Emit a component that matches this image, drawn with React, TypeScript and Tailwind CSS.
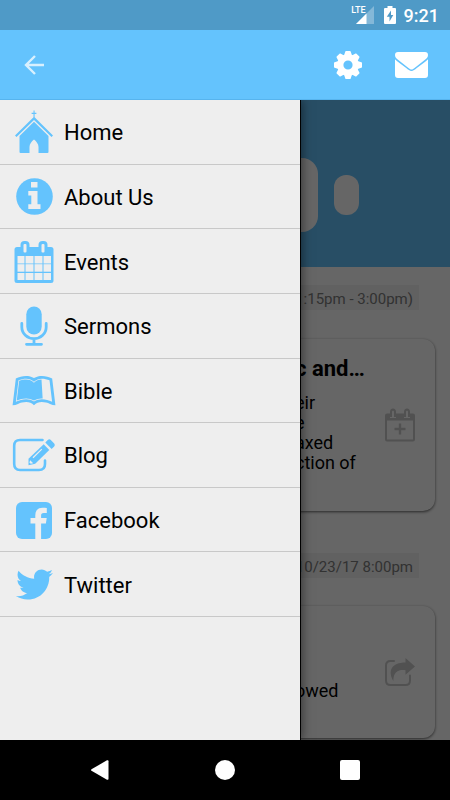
import type { ReactNode } from "react";
import { FaLeanpub, FaTwitter } from "react-icons/fa";

function ChurchIcon() {
  return (
    <svg viewBox="0 0 40 44" className="h-11 w-10" fill="currentColor">
      <path d="M19.500 0.500h1.100v2.200h1.800v1.200h-1.800V7.200L39 25.400 37.500 27 20 10 2.500 27 1 25.400 19.500 7.200V3.900h-1.900V2.700h1.900z" />
      <path d="M20 11.800 34.500 26V42a1 1 0 0 1-1 1H24.500V37c0-3-2-5.500-4.500-7.500-2.500 2-4.500 4.500-4.500 7.500V43H6.500a1 1 0 0 1-1-1V26z" />
    </svg>
  );
}

function InfoIcon() {
  return (
    <svg viewBox="0 0 37 37" className="size-[37px]">
      <circle cx="18.500" cy="18.500" r="18.300" fill="currentColor" />
      <path d="M15 4h6.500v5.500H15zM12.300 13h9.200v13.200h3V31H12.300v-4.800h3V17.500h-3z" fill="#eee" />
    </svg>
  );
}

function CalendarIcon() {
  return (
    <svg viewBox="0 0 40 44" className="h-11 w-10">
      <rect x="0.5" y="7" width="39" height="36" rx="2.500" fill="currentColor" />
      <rect x="6.500" y="1" width="9" height="14" rx="4" fill="currentColor" />
      <rect x="24.500" y="1" width="9" height="14" rx="4" fill="currentColor" />
      <g fill="#eee">
        <rect x="9.500" y="4" width="3" height="8.500" rx="1" />
        <rect x="27.500" y="4" width="3" height="8.500" rx="1" />
        {[16, 24.2, 33].map((y, row) =>
          [3.5, 11.5, 20.5, 29.5].map((x, col) => (
            <rect key={`${row}-${col}`} x={x} y={y} width={col === 0 ? 7 : col === 3 ? 7.5 : 8} height={row === 2 ? 7 : 7.500} />
          )),
        )}
      </g>
    </svg>
  );
}

function MicrophoneIcon() {
  return (
    <svg viewBox="0 0 28 40" className="h-10 w-7">
      <rect x="6.300" y="0.500" width="15.400" height="28" rx="7.700" fill="currentColor" />
      <path d="M1.800 17.500v3.500a12.200 11.700 0 0 0 24.400 0v-3.500M14 33v5M6.500 38.300h15" fill="none" stroke="currentColor" strokeWidth="2.800" strokeLinecap="round" />
    </svg>
  );
}

function EditIcon() {
  return (
    <svg viewBox="0 0 44 36" className="h-9 w-11">
      <path d="M30.500 3H8Q2.200 3 2.200 8.800V27Q2.200 33 8 33H27Q33 33 33 27V23.500" fill="none" stroke="currentColor" strokeWidth="2.600" strokeLinecap="round" />
      <path d="M31.700 7.200 37.300 13 23.200 26.800 16.500 28.200V21.700z" fill="currentColor" />
      <path d="m33.300 5.600 2.500-2.500q1.500-1.500 3 0l3.400 3.400q1.300 1.500 0 2.900L39.600 12z" fill="currentColor" />
      <path d="m21 20.800 8.800-8.700" stroke="#eee" strokeWidth="1.200" />
      <path d="m18.200 23.200 3 3-2.500.6-1.300-1.300z" fill="#eee" />
    </svg>
  );
}

function FacebookIcon() {
  return (
    <svg viewBox="0 0 36 37" className="h-[37px] w-9">
      <rect width="36" height="37" rx="6" fill="currentColor" />
      <path d="M19.300 37V21.500h-4.800v-5.500h4.800v-2.800c0-4.800 2.800-7.400 7.200-7.400 1.600 0 3 .1 4.300.3v4.900h-3c-2.200 0-2.700 1.100-2.700 2.700v2.300h5.600l-.8 5.500h-4.800V37z" fill="#eee" />
    </svg>
  );
}

function GearIcon() {
  return (
    <svg viewBox="-14 -14 28 28" className="size-7">
      <circle r="7.700" fill="none" stroke="currentColor" strokeWidth="6.200" />
      {[0, 45, 90, 135, 180, 225, 270, 315].map((angle) => (
        <path key={angle} d="M-4-9.500-2.700-13.400Q-2.500-14-2-14H2Q2.500-14 2.700-13.400L4-9.500z" fill="currentColor" transform={`rotate(${angle})`} />
      ))}
    </svg>
  );
}

function EnvelopeIcon() {
  return (
    <svg viewBox="0 0 33 26" className="h-[26px] w-[33px]" fill="currentColor">
      <path d="M3 0h27q3 0 3 3c0 2-1.300 3.500-3 4.800L20.500 15.200C18.500 16.700 17.500 17.500 16.500 17.500s-2-.8-4-2.300L3 7.800C1.300 6.500 0 5 0 3q0-3 3-3z" />
      <path d="M0 7.200c.8 1 1.800 1.800 2.800 2.500l8.400 6.400c2 1.600 3.600 2.900 5.300 2.900s3.300-1.300 5.300-2.900l8.400-6.400c1-.7 2-1.500 2.800-2.500V23q0 3-3 3H3q-3 0-3-3z" />
    </svg>
  );
}

function CalendarPlusIcon() {
  return (
    <svg viewBox="0 0 30 34" className="h-[34px] w-[30px]" fill="none" stroke="currentColor">
      <path d="M1 12V31.500Q1 32.500 2 32.500H28Q29 32.500 29 31.500V12" strokeWidth="2" />
      <path d="M0 12.500V7.500Q0 5.500 2 5.500H5V10h6V5.500h8V10h6V5.500h3q2 0 2 2v5z" fill="currentColor" stroke="none" />
      <path d="M6 9V4a2 2.500 0 0 1 4 0V9M20 9V4a2 2.500 0 0 1 4 0V9" strokeWidth="2" />
      <path d="M15 15.500v11M9.500 21h11" strokeWidth="2.400" />
    </svg>
  );
}

function ShareIcon() {
  return (
    <svg viewBox="0 0 30 28" className="h-7 w-[30px]">
      <path d="M9 3H5.500Q1 3 1 7.500V22.500Q1 27 5.500 27H20.500Q25 27 25 22.500V17.500" fill="none" stroke="currentColor" strokeWidth="2" strokeLinecap="round" />
      <path d="M20.500 0 30 8.500l-9.500 8.300v-4.600c-7-.6-12 1-12.200 10.800C2.500 13 6.500 4.600 20.500 4.600z" fill="currentColor" />
    </svg>
  );
}

const menu: { label: string; icon: ReactNode }[] = [
  { label: "Home", icon: <ChurchIcon /> },
  { label: "About Us", icon: <InfoIcon /> },
  { label: "Events", icon: <CalendarIcon /> },
  { label: "Sermons", icon: <MicrophoneIcon /> },
  { label: "Bible", icon: <FaLeanpub className="h-[39px] w-[44px]" /> },
  { label: "Blog", icon: <EditIcon /> },
  { label: "Facebook", icon: <FacebookIcon /> },
  { label: "Twitter", icon: <FaTwitter className="size-[37px]" /> },
];

function StatusBar() {
  return (
    <div className="flex h-[30px] shrink-0 items-center justify-end bg-[#4f9ac7] pr-[11px] text-white">
      <span className="self-start pt-1 text-[9px] leading-3 font-medium">LTE</span>
      <svg viewBox="0 0 18 18" className="-ml-[10px] h-[18px] w-[18px]">
        <path d="M18 0V18H0z" fill="#fff" fillOpacity="0.300" />
        <path d="M10.500 7.500V18H0z" fill="#fff" />
      </svg>
      <svg viewBox="0 0 12 18" className="ml-[10px] h-[18px] w-3">
        <path d="M3.500 0h5v2H11q1 0 1 1V17q0 1-1 1H1q-1 0-1-1V3q0-1 1-1h2.500z" fill="#fff" />
        <path d="M7 4.500 2.800 10.800H5.500V15.500L9.300 9H7z" fill="#4f9ac7" />
      </svg>
      <time className="ml-2 pt-0.5 text-lg leading-6 font-medium">9:21</time>
    </div>
  );
}

function DateTag({ children }: { children: ReactNode }) {
  return (
    <div className="flex justify-end pr-4">
      <span className="h-[25px] bg-[#f2f2f2] px-1.5 pt-0.5 text-[15px] leading-6 text-[#7d7d7d]">{children}</span>
    </div>
  );
}

function Card({ icon, label, children }: { icon: ReactNode; label: string; children: ReactNode }) {
  return (
    <article className="flex items-center justify-between rounded-xl bg-white pr-5 pl-[280px] shadow-[0_1px_3px_rgba(0,0,0,0.6)]">
      <div className="self-start whitespace-nowrap text-black">{children}</div>
      <button type="button" aria-label={label} className="text-[#cacaca]">
        {icon}
      </button>
    </article>
  );
}

export default function App() {
  return (
    <div className="flex h-screen flex-col overflow-hidden bg-white font-[Roboto,sans-serif]">
      <StatusBar />
      <header className="flex h-[70px] shrink-0 items-center border-b border-[#57b4ee] bg-[#64c3fd] pr-[22px] pl-6 text-white">
        <button type="button" aria-label="Back" className="mr-auto opacity-75">
          <svg viewBox="0 0 20 20" className="size-5" fill="none" stroke="currentColor" strokeWidth="2.400">
            <path d="M20 10H2M11 1 2 10l9 9" />
          </svg>
        </button>
        <button type="button" aria-label="Settings" className="mr-[33px]">
          <GearIcon />
        </button>
        <button type="button" aria-label="Messages">
          <EnvelopeIcon />
        </button>
      </header>

      <div className="relative min-h-0 flex-1 overflow-hidden">
        <main>
          <div className="flex h-[167px] gap-4 bg-[#64c3fd] pt-[58px] pl-[282px]">
            <span className="h-[74px] w-9 rounded-2xl bg-white" />
            <span className="mt-[17px] h-10 w-[25px] rounded-xl bg-white" />
          </div>
          <div className="px-[15px] pt-[18px]">
            <DateTag>1:15pm - 3:00pm)</DateTag>
            <div className="mt-[29px] grid h-[172px]">
              <Card label="Add to calendar" icon={<CalendarPlusIcon />}>
                <h2 className="pt-[18px] text-[22px] leading-6 font-bold">c and…</h2>
                <p className="mt-3 text-lg leading-5">
                  eir
                  <br />e
                  <br />
                  axed
                  <br />
                  ction of
                </p>
              </Card>
            </div>
            <div className="mt-[42px]">
              <DateTag>10/23/17 8:00pm</DateTag>
            </div>
            <div className="mt-7 grid h-[132px]">
              <Card label="Share" icon={<ShareIcon />}>
                <p className="pt-[75px] text-lg leading-5">owed</p>
              </Card>
            </div>
          </div>
        </main>
        <div className="absolute inset-0 bg-black/60" />
        <nav className="absolute inset-y-0 left-0 w-2/3 bg-[#eee] shadow-[1px_0_0_#000,2px_0_10px_rgba(0,0,0,0.5)]">
          <ul className="grid h-[517px] grid-rows-8">
            {menu.map(({ label, icon }) => (
              <li key={label} className="border-b border-[#c8c8c8]">
                <a href="#" className="flex h-full items-center pt-px pl-3 text-black">
                  <span className="flex w-11 justify-center text-[#64c3fd]">{icon}</span>
                  <span className="ml-2 pt-0.5 text-[22px] leading-8">{label}</span>
                </a>
              </li>
            ))}
          </ul>
        </nav>
      </div>

      <footer className="h-[60px] shrink-0 bg-black">
        <div className="mx-auto grid h-full w-5/6 grid-cols-3 items-center justify-items-center text-white">
          <button type="button" aria-label="System back">
            <svg viewBox="0 0 20 20" className="size-5" fill="currentColor">
              <path d="M1.500 9.200 17 .3q1.500-.6 1.500.9V18.800q0 1.500-1.500.9L1.500 10.800q-1-.8 0-1.600z" />
            </svg>
          </button>
          <button type="button" aria-label="System home" className="size-5 rounded-full bg-white" />
          <button type="button" aria-label="Recent apps" className="size-5 rounded-xs bg-white" />
        </div>
      </footer>
    </div>
  );
}
